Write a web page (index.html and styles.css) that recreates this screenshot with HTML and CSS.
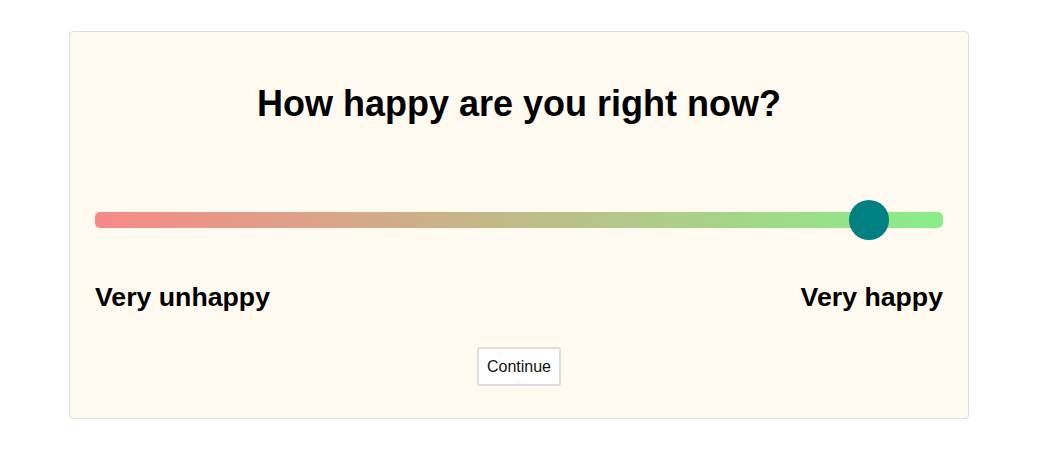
FILE: index.html
```html
<!DOCTYPE html>
<html lang="en">
<head>
<meta charset="utf-8">
<title>Happiness survey</title>
<link rel="stylesheet" href="styles.css">
</head>
<body>
<main class="card">
  <h1 class="question">How happy are you right now?</h1>
  <input class="slider" type="range" min="0" max="100" step="0.1" value="93.3" aria-label="Happiness">
  <div class="labels">
    <span class="label">Very unhappy</span>
    <span class="label">Very happy</span>
  </div>
  <div class="actions">
    <button class="continue" type="button">Continue</button>
  </div>
</main>
</body>
</html>
```

FILE: styles.css
```css
* { box-sizing: border-box; }

body {
  margin: 0;
  background: #ffffff;
  font-family: "Liberation Sans", Arial, sans-serif;
  color: #000;
}

.card {
  width: 900px;
  margin: 31px 0 0 69px;
  padding: 0 25px 32px;
  background: #fffaf0;
  border: 1px solid #e2dfda;
  border-radius: 4px;
  display: flex;
  flex-direction: column;
}

.question {
  margin: 51px 0 0;
  font-size: 36px;
  line-height: 41px;
  font-weight: 700;
  text-align: center;
}

.slider {
  -webkit-appearance: none;
  appearance: none;
  display: block;
  width: 100%;
  height: 40px;
  margin: 76px 0 0;
  padding: 0;
  background: transparent;
}

.slider::-webkit-slider-runnable-track {
  height: 16px;
  border-radius: 5px;
  background: linear-gradient(to right, #f88888, #88ee88);
}

.slider::-webkit-slider-thumb {
  -webkit-appearance: none;
  appearance: none;
  width: 40px;
  height: 40px;
  margin-top: -12px;
  border: none;
  border-radius: 50%;
  background: #008080;
}

.labels {
  display: flex;
  justify-content: space-between;
  margin-top: 42px;
}

.label {
  font-size: 26.7px;
  line-height: 31px;
  font-weight: 700;
}

.actions {
  display: flex;
  justify-content: center;
  margin-top: 34px;
}

.continue {
  font-family: "Liberation Sans", Arial, sans-serif;
  font-size: 16px;
  line-height: 18px;
  padding: 9px 8px 8px;
  color: #111;
  background: #fff;
  border: 2px solid #dedede;
  border-radius: 3px;
}
```
